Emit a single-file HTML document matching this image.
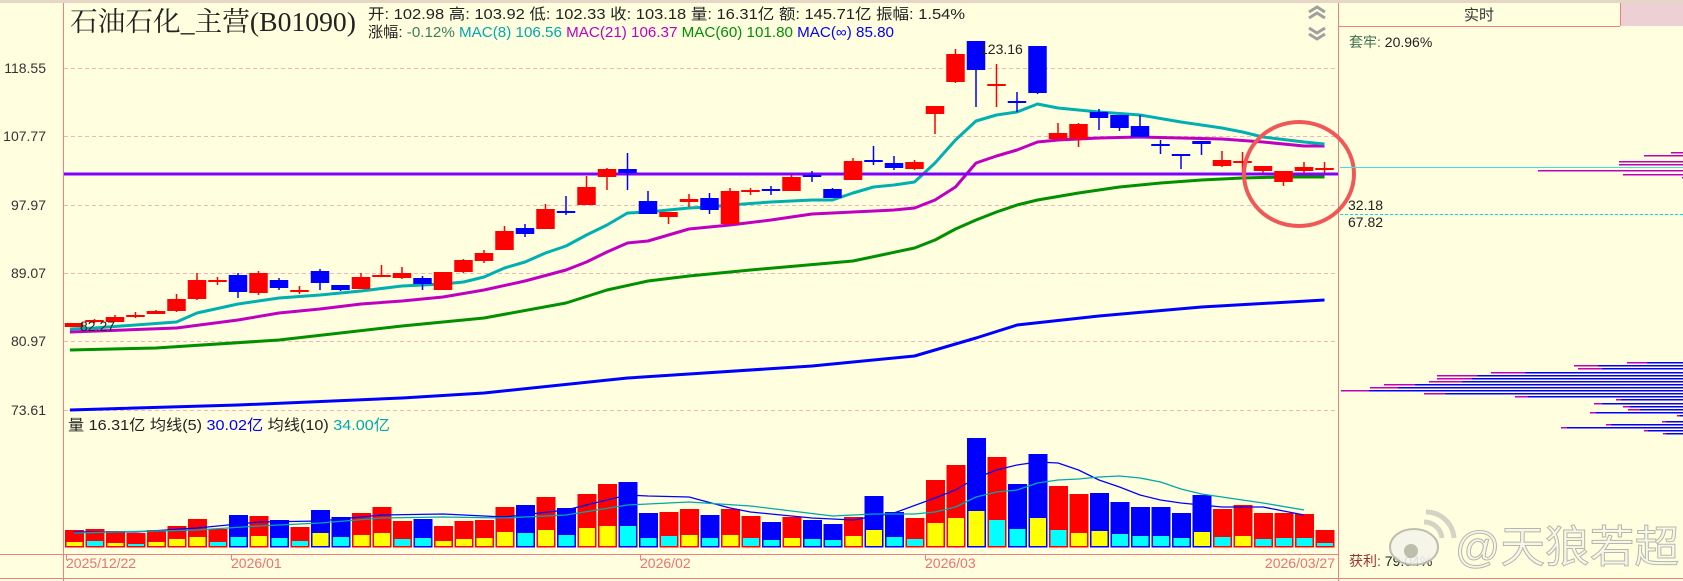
<!DOCTYPE html>
<html><head><meta charset="utf-8">
<style>
html,body{margin:0;padding:0;background:#ffffe0;}
svg{display:block;}
text{font-family:"Liberation Sans","Noto Sans CJK SC",sans-serif;}
</style></head>
<body>
<svg id="s" width="1683" height="581" viewBox="0 0 1683 581" xmlns="http://www.w3.org/2000/svg">
<rect x="0" y="0" width="1683" height="581" fill="#ffffe0"/>
<rect x="0" y="0" width="1683" height="3" fill="#e6d6c6"/>
<g stroke="#f4b4b4" stroke-dasharray="4,3" stroke-width="1">
<line x1="64" y1="68.5" x2="1338" y2="68.5"/>
<line x1="64" y1="136.5" x2="1338" y2="136.5"/>
<line x1="64" y1="205.5" x2="1338" y2="205.5"/>
<line x1="64" y1="273.5" x2="1338" y2="273.5"/>
<line x1="64" y1="341.5" x2="1338" y2="341.5"/>
<line x1="64" y1="410.5" x2="1338" y2="410.5"/>
</g>
<line x1="63.5" y1="3" x2="63.5" y2="581" stroke="#f08080"/>
<line x1="1338.5" y1="3" x2="1338.5" y2="581" stroke="#f08080"/>
<line x1="0" y1="554.5" x2="1338" y2="554.5" stroke="#f08080"/>
<line x1="0" y1="578.5" x2="1683" y2="578.5" stroke="#f08080"/>
<g fill="#333" font-size="14" text-anchor="end">
<text x="46" y="73">118.55</text>
<text x="46" y="141">107.77</text>
<text x="46" y="210">97.97</text>
<text x="46" y="278">89.07</text>
<text x="46" y="346">80.97</text>
<text x="46" y="415">73.61</text>
</g>
<text x="70" y="31" font-size="27" fill="#222" textLength="286" lengthAdjust="spacingAndGlyphs" style="font-family:'Liberation Serif','Noto Serif CJK SC',serif">石油石化_主营(B01090)</text>
<text x="368" y="19" font-size="15" fill="#222" textLength="597" lengthAdjust="spacingAndGlyphs">开: 102.98 高: 103.92 低: 102.33 收: 103.18 量: 16.31亿 额: 145.71亿 振幅: 1.54%</text>
<text x="368" y="37" font-size="15" textLength="526" lengthAdjust="spacingAndGlyphs"><tspan fill="#222">涨幅: </tspan><tspan fill="#3a8060">-0.12% </tspan><tspan fill="#00a8b0">MAC(8) 106.56 </tspan><tspan fill="#c000c0">MAC(21) 106.37 </tspan><tspan fill="#009000">MAC(60) 101.80 </tspan><tspan fill="#0000ff">MAC(∞) 85.80</tspan></text>
<g fill="none" stroke="#a0a0a0" stroke-width="3">
<polyline points="1309,12 1317,7 1325,12"/><polyline points="1309,18 1317,13 1325,18"/>
<polyline points="1309,28 1317,33 1325,28"/><polyline points="1309,34 1317,39 1325,34"/>
</g>
<g id="ma"></g>
<line x1="64" y1="174" x2="1338" y2="174" stroke="#8000ff" stroke-width="3"/>
<g id="cd"></g>
<text x="80" y="331" font-size="14" fill="#222">82.27</text>
<text x="980" y="54" font-size="14" fill="#222">123.16</text>
<ellipse cx="1299" cy="174" rx="55" ry="52" fill="none" stroke="#f05858" stroke-width="4"/>
<text x="68" y="430" font-size="15" textLength="322" lengthAdjust="spacingAndGlyphs"><tspan fill="#222">量 16.31亿 均线(5) </tspan><tspan fill="#0000ff">30.02亿 </tspan><tspan fill="#222">均线(10) </tspan><tspan fill="#00a8b0">34.00亿</tspan></text>
<g id="vol"></g>
<g fill="#f07070" font-size="14">
<text x="66" y="568">2025/12/22</text>
<text x="231" y="568">2026/01</text>
<text x="640" y="568">2026/02</text>
<text x="925" y="568">2026/03</text>
<text x="1335" y="568" text-anchor="end">2026/03/27</text>
</g>
<g stroke="#f08080"><line x1="66.5" y1="554" x2="66.5" y2="560"/><line x1="231.5" y1="554" x2="231.5" y2="560"/><line x1="640.5" y1="554" x2="640.5" y2="560"/><line x1="925.5" y1="554" x2="925.5" y2="560"/></g>
<line x1="1338" y1="26.5" x2="1620" y2="26.5" stroke="#f08080"/>
<line x1="1620.5" y1="3" x2="1620.5" y2="26" stroke="#f08080"/>
<rect x="1621" y="3" width="62" height="23" fill="#ecd0d4"/>
<text x="1479" y="20" font-size="15" fill="#333" text-anchor="middle">实时</text>
<text x="1349" y="47" font-size="14"><tspan fill="#407050">套牢: </tspan><tspan fill="#222">20.96%</tspan></text>
<line x1="1340" y1="167.5" x2="1683" y2="167.5" stroke="#40e0e0"/>
<line x1="1340" y1="214.5" x2="1683" y2="214.5" stroke="#00e0e0" stroke-dasharray="3,2"/>
<text x="1348" y="210" font-size="14" fill="#222">32.18</text>
<text x="1348" y="227" font-size="14" fill="#222">67.82</text>
<g id="prof"></g>
<text x="1349" y="566" font-size="14"><tspan fill="#a03030">获利: </tspan><tspan fill="#222">79.04%</tspan></text>
<g opacity="0.9">
<ellipse cx="1414" cy="547" rx="24" ry="18" fill="#f4f4ec" stroke="#b8b8a8" stroke-width="2"/>
<circle cx="1411" cy="551" r="7" fill="#b8b8a8"/>
<path d="M1424 522 a18 18 0 0 1 18 16 M1426 512 a28 28 0 0 1 28 26" fill="none" stroke="#d0d0c4" stroke-width="5"/>
<text x="1455" y="562" font-size="44" fill="#f6f6ee" stroke="#b0b0a0" stroke-width="1" textLength="224" lengthAdjust="spacingAndGlyphs">@天狼若超</text>
</g>
</svg>
<script>
(function(){
var NS="http://www.w3.org/2000/svg";
function el(p,t,a){var e=document.createElementNS(NS,t);for(var k in a)e.setAttribute(k,a[k]);p.appendChild(e);return e;}
var cx=function(i){return 74+20.5*i;};
var C=[[323,327,323,327,'r'],[320,322,319,323,'r'],[317,322,315,322,'r'],[315,317,312,318,'r'],[311,314,310,314,'r'],[299,311,294,312,'r'],[280,299,273,300,'r'],[280,281,277,285,'r'],[275,292,273,298,'b'],[273,293,271,295,'r'],[280,288,278,290,'b'],[290,291,286,294,'r'],[271,283,269,290,'b'],[285,290,285,291,'b'],[277,289,273,289,'r'],[275,276,265,277,'r'],[273,278,267,279,'r'],[278,284,276,290,'b'],[272,290,272,290,'r'],[260,272,259,273,'r'],[253,261,250,263,'r'],[231,250,226,250,'r'],[228,234,224,237,'b'],[209,229,204,229,'r'],[211,213,196,215,'b'],[187,205,176,205,'r'],[169,177,168,190,'r'],[169,173,153,190,'b'],[201,214,191,214,'b'],[212,217,212,224,'r'],[199,202,194,207,'r'],[198,210,193,214,'b'],[191,224,188,224,'r'],[190,191,188,195,'r'],[189,191,186,195,'b'],[177,191,175,191,'r'],[175,176,171,182,'b'],[189,198,188,198,'b'],[161,180,158,180,'r'],[160,161,146,165,'b'],[163,168,156,170,'b'],[162,169,160,170,'r'],[106,114,106,134,'r'],[54,82,49,83,'r'],[41,70,41,107,'b'],[84,85,64,107,'r'],[101,102,92,112,'b'],[46,93,46,94,'b'],[133,139,123,139,'r'],[124,139,123,147,'r'],[112,118,109,130,'b'],[115,128,115,131,'b'],[126,137,115,137,'b'],[144,145,140,154,'b'],[154,156,154,169,'b'],[141,144,141,155,'b'],[160,166,151,167,'r'],[161,162,152,172,'r'],[166,171,166,173,'r'],[171,182,171,186,'r'],[167,171,162,173,'r'],[168,169,162,173,'r']];
var cd=document.getElementById('cd');
C.forEach(function(c,i){var col=c[4]=='r'?'#ff0000':'#0000ff';var x=cx(i);
el(cd,'rect',{x:x-0.75,y:c[2],width:1.5,height:c[3]-c[2],fill:col});
var h=Math.max(2,c[1]-c[0]);el(cd,'rect',{x:x-9.25,y:c[0],width:18.5,height:h,fill:col});});
function line(g,pts,col,w){var s=pts.map(function(p){return cx(p[0])+','+p[1];}).join(' ');el(g,'polyline',{points:s,fill:'none',stroke:col,'stroke-width':w,'stroke-linejoin':'round'});}
var ma=document.getElementById('ma');
line(ma,[[-0.2,410],[8,405],[16,398],[20,393],[27,378],[30,374],[36,366],[41,356],[44,338],[46,325],[50,316],[55,307],[61,300]],'#0000ff',3);
line(ma,[[-0.2,350],[4,348],[10,340],[16,326],[20,318],[24,303],[26,290],[28,281],[30,276],[33,270],[38,261],[41,248],[42,240],[43,229],[44,220],[45,212],[46,205],[47,200],[49,193],[51,187],[53,183],[55,180],[57,178],[59,177],[61,177]],'#009000',3);
line(ma,[[-0.2,332],[5,328],[8,320],[10,313],[12,309],[14,304],[16,301],[18,297],[20,290],[22,281],[24,270],[25,262],[26,252],[27,243],[28,241],[30,229],[32,225],[34,220],[36,214],[38,212],[40,210],[41,208],[42,200],[43,187],[44,163],[45,156],[46,150],[47,142],[48,140],[50,138],[52,137],[54,138],[56,139],[58,142],[60,146],[61,146]],'#c000c0',3);
line(ma,[[-0.2,329],[1,328],[5,322],[6,313],[8,304],[10,298],[12,295],[14,291],[16,286],[18,284],[19,282],[20,277],[21,268],[22,262],[23,253],[24,246],[25,235],[26,225],[27,213],[28,212],[29,210],[30,208],[31,207],[32,205],[34,202],[36,200],[37,200],[38,193],[39,187],[40,185],[41,182],[42,163],[43,140],[44,121],[45,115],[46,112],[47,104],[48,108],[50,112],[52,115],[54,122],[56,128],[57,132],[58,137],[60,142],[61,144]],'#00b0b0',3);
var V=[[530,542,'r',0],[529,541,'r',1],[531,543,'r',0],[533,544,'r',1],[530,542,'r',0],[526,539,'r',0],[519,537,'r',0],[529,542,'r',1],[515,537,'b',1],[516,536,'r',0],[520,538,'b',1],[527,541,'r',1],[510,533,'b',0],[517,537,'b',1],[513,535,'r',0],[507,533,'r',0],[521,539,'r',1],[519,538,'b',1],[526,541,'r',0],[521,539,'r',0],[520,538,'r',0],[507,532,'r',0],[505,533,'b',1],[497,530,'r',0],[508,535,'b',1],[494,528,'r',0],[484,526,'r',0],[482,526,'b',1],[513,538,'b',1],[512,536,'r',1],[509,535,'r',0],[515,538,'b',1],[509,535,'r',0],[516,538,'r',1],[522,540,'b',1],[517,538,'r',0],[520,539,'b',1],[524,540,'b',1],[517,536,'r',0],[496,530,'b',0],[512,537,'b',1],[518,539,'r',1],[480,523,'r',0],[465,518,'r',0],[438,511,'b',0],[457,520,'r',1],[484,529,'b',1],[454,518,'b',0],[486,530,'r',1],[494,533,'r',0],[493,531,'b',0],[502,534,'b',1],[507,536,'b',1],[507,536,'b',1],[513,538,'b',1],[495,532,'b',0],[509,537,'r',1],[505,536,'r',0],[513,539,'r',1],[513,538,'r',1],[514,538,'r',1],[530,543,'r',1]];
var vg=document.getElementById('vol');
V.forEach(function(v,i){var x=65+20.5*i;var col=v[2]=='r'?'#ff0000':'#0000ff';
el(vg,'rect',{x:x,y:v[0],width:19,height:547-v[0],fill:col});
el(vg,'rect',{x:x+1.5,y:v[1],width:16,height:546-v[1],fill:v[3]?'#00ffff':'#ffff00'});
el(vg,'rect',{x:x+0.5,y:v[0]+0.5,width:18,height:546.5-v[0],fill:'none',stroke:col,'stroke-width':1});});
line(vg,[[0,532],[3,532],[6,528],[9,522],[12,521],[15,515],[18,514],[21,517],[24,510],[26,500],[27,495],[28,496],[30,497],[32,508],[33,512],[36,518],[38,520],[40,513],[42,498],[43,490],[44,478],[45,470],[46,465],[47,462],[48,463],[49,470],[50,480],[51,487],[52,495],[53,500],[54,503],[56,507],[58,507],[60,515]],'#0000ff',1.3);
line(vg,[[0,533],[6,530],[9,526],[12,523],[15,518],[18,517],[21,518],[24,515],[27,505],[29,503],[30,502],[33,506],[35,511],[37,516],[39,514],[41,514],[42,512],[43,507],[44,497],[45,492],[46,490],[47,483],[48,480],[49,479],[50,477],[51,476],[52,478],[53,482],[54,489],[55,494],[56,497],[57,500],[58,503],[60,510]],'#00a8a8',1.3);
var P=[[362,1627,1647],[365,1574,1598],[368,1578,1602],[372,1491,1525],[375,1437,1477],[378,1437,1472],[381,1429,1462],[384,1384,1415],[387,1370,1398],[390,1341,1369],[393,1424,1445],[396,1515,1528],[399,1616,1621],[403,1594,1602],[406,1623,1630],[409,1628,1640],[412,1590,1596],[415,1677,1680],[421,1662,1666],[424,1606,1611],[427,1561,1567],[430,1644,1648],[433,1663,1666],
[152,1671,1683],[155,1644,1683],[161,1619,1683],[164,1619,1683],[170,1538,1683],[174,1623,1683],[177,1682,1683]];
var pg=document.getElementById('prof');
P.forEach(function(p){el(pg,'rect',{x:p[1],y:p[0],width:p[2]-p[1],height:1.5,fill:'#c000c0'});el(pg,'rect',{x:p[2],y:p[0],width:1683-p[2],height:1.5,fill:'#0000ff'});});
})();
</script>
</body></html>
